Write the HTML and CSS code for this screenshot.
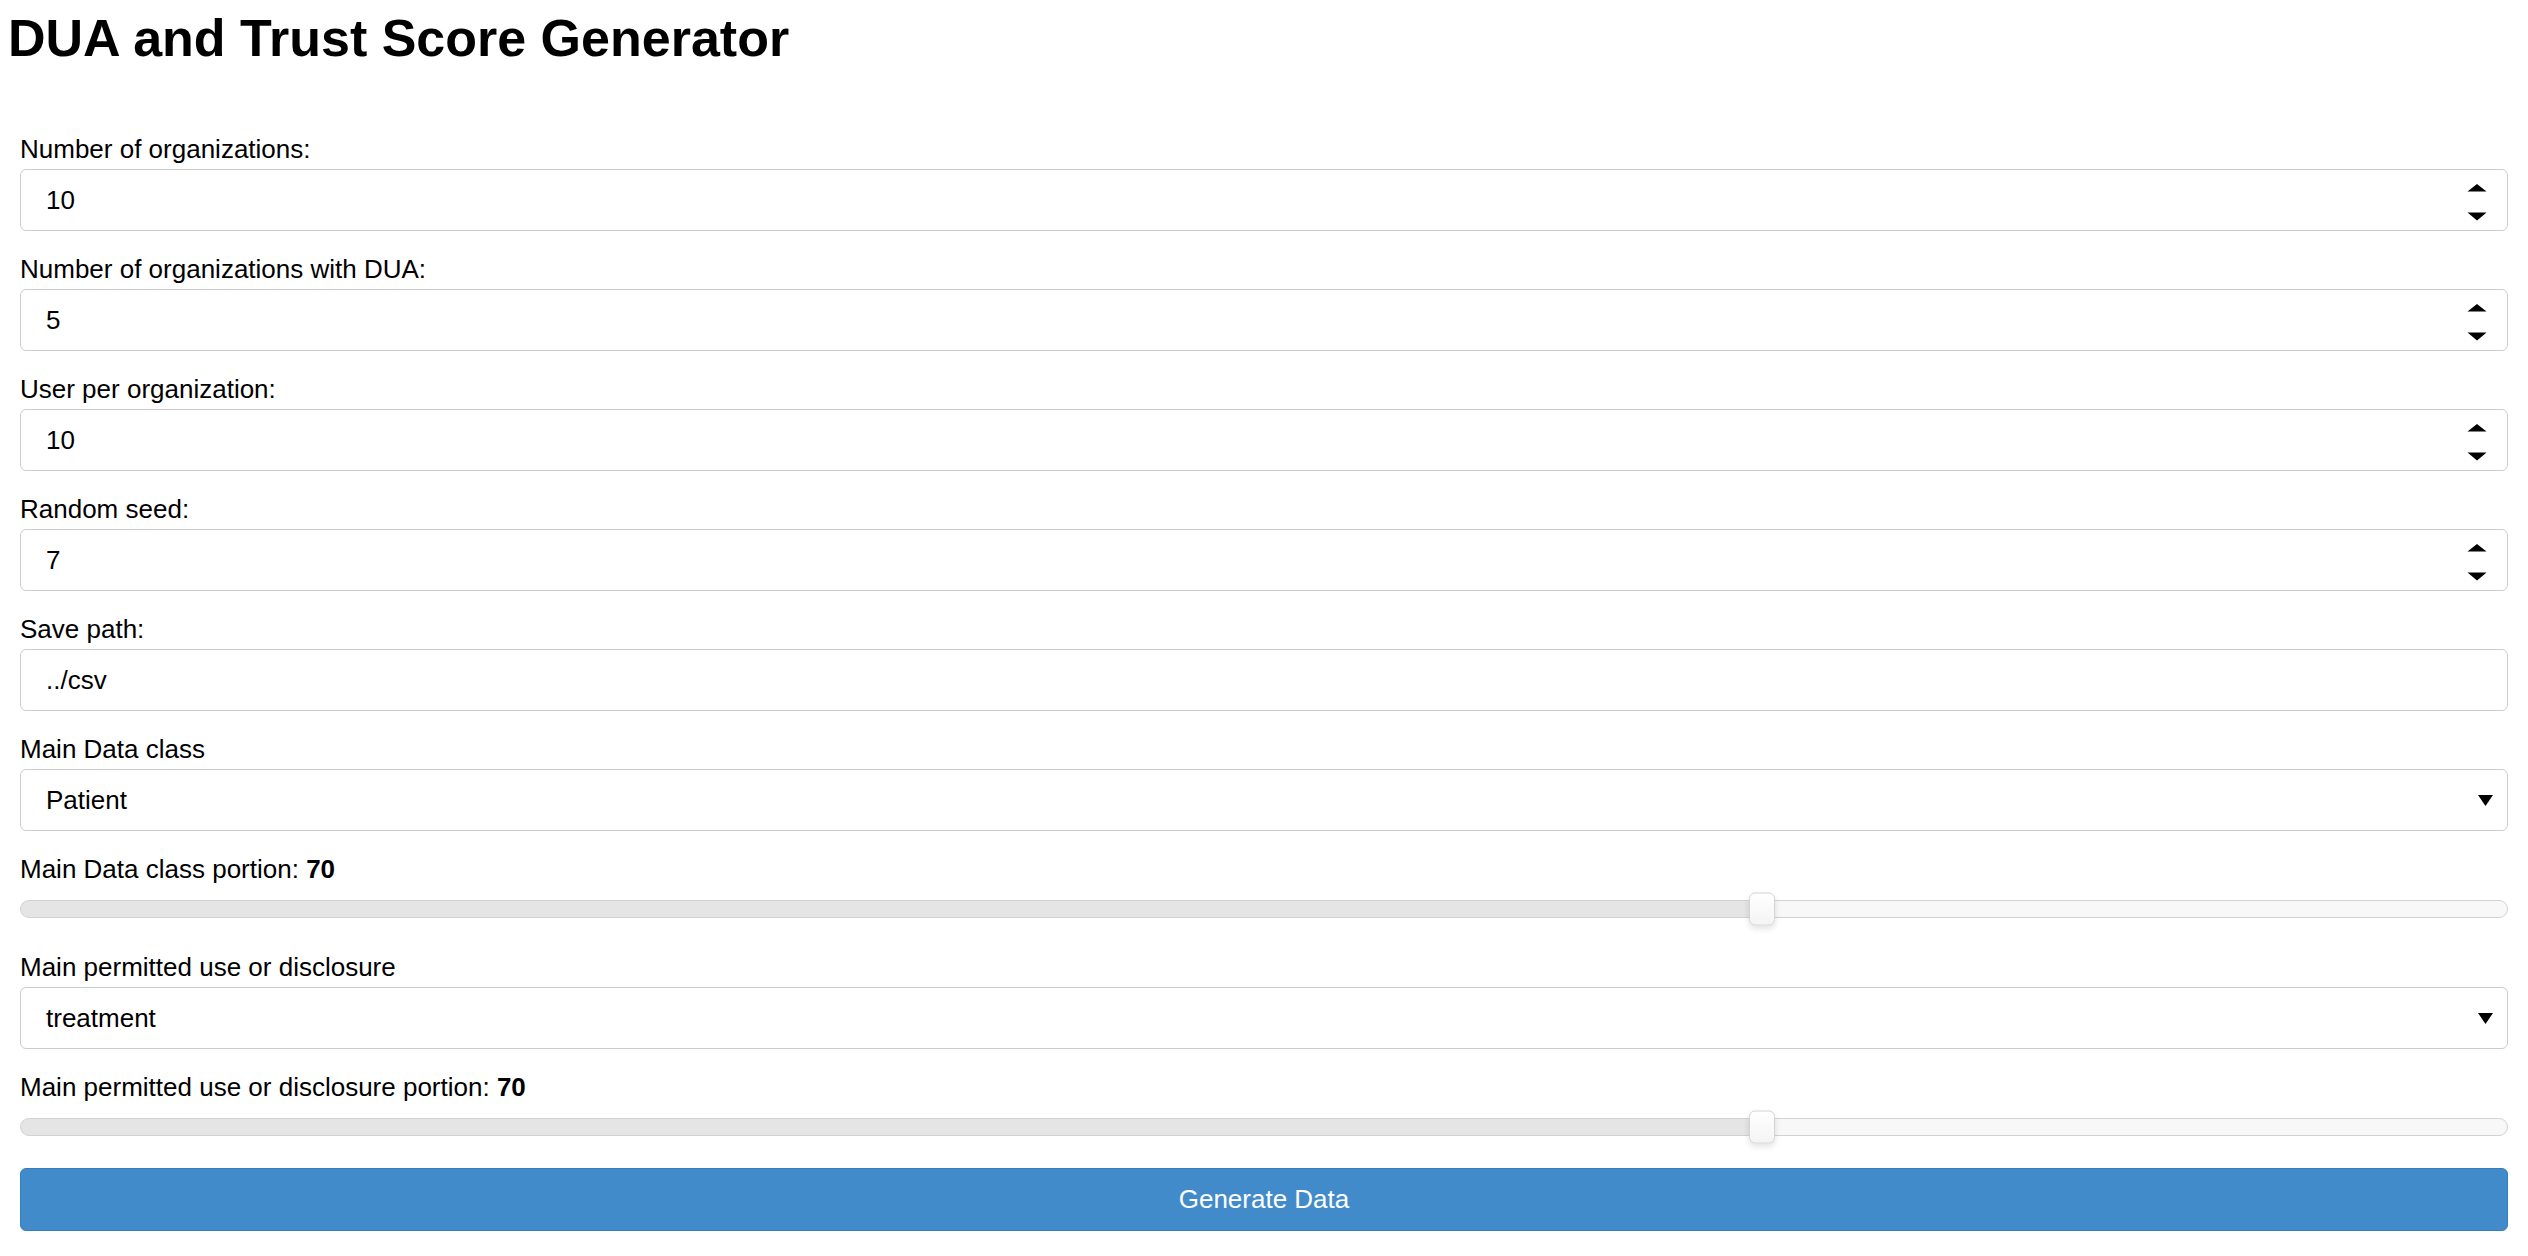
FILE: index.html
```html
<!DOCTYPE html>
<html lang="en">
<head>
<meta charset="utf-8">
<title>DUA and Trust Score Generator</title>
<link rel="stylesheet" href="styles.css">
</head>
<body>
<h1 class="title">DUA and Trust Score Generator</h1>
<form class="form">
  <div class="group">
    <label class="label" for="n-org">Number of organizations:</label>
    <div class="field">
      <input class="control" id="n-org" type="number" value="10">
      <svg class="spin" viewBox="0 0 20 37" aria-hidden="true"><polygon points="0.5,7.5 10,0 19.5,7.5"/><polygon points="0.5,28.5 19.5,28.5 10,36.5"/></svg>
    </div>
  </div>
  <div class="group">
    <label class="label" for="n-dua">Number of organizations with DUA:</label>
    <div class="field">
      <input class="control" id="n-dua" type="number" value="5">
      <svg class="spin" viewBox="0 0 20 37" aria-hidden="true"><polygon points="0.5,7.5 10,0 19.5,7.5"/><polygon points="0.5,28.5 19.5,28.5 10,36.5"/></svg>
    </div>
  </div>
  <div class="group">
    <label class="label" for="n-user">User per organization:</label>
    <div class="field">
      <input class="control" id="n-user" type="number" value="10">
      <svg class="spin" viewBox="0 0 20 37" aria-hidden="true"><polygon points="0.5,7.5 10,0 19.5,7.5"/><polygon points="0.5,28.5 19.5,28.5 10,36.5"/></svg>
    </div>
  </div>
  <div class="group">
    <label class="label" for="seed">Random seed:</label>
    <div class="field">
      <input class="control" id="seed" type="number" value="7">
      <svg class="spin" viewBox="0 0 20 37" aria-hidden="true"><polygon points="0.5,7.5 10,0 19.5,7.5"/><polygon points="0.5,28.5 19.5,28.5 10,36.5"/></svg>
    </div>
  </div>
  <div class="group">
    <label class="label" for="path">Save path:</label>
    <div class="field">
      <input class="control" id="path" type="text" value="../csv">
    </div>
  </div>
  <div class="group">
    <label class="label" for="dclass">Main Data class</label>
    <div class="field">
      <select class="control" id="dclass"><option>Patient</option></select>
      <svg class="caret" viewBox="0 0 15 11" aria-hidden="true"><polygon points="0,0 15,0 7.5,11"/></svg>
    </div>
  </div>
  <div class="group">
    <div class="label">Main Data class portion: <b>70</b></div>
    <div class="slider" style="--value:70%">
      <div class="track"></div>
      <div class="thumb"></div>
    </div>
  </div>
  <div class="group">
    <label class="label" for="puse">Main permitted use or disclosure</label>
    <div class="field">
      <select class="control" id="puse"><option>treatment</option></select>
      <svg class="caret" viewBox="0 0 15 11" aria-hidden="true"><polygon points="0,0 15,0 7.5,11"/></svg>
    </div>
  </div>
  <div class="group">
    <div class="label">Main permitted use or disclosure portion: <b>70</b></div>
    <div class="slider" style="--value:70%">
      <div class="track"></div>
      <div class="thumb"></div>
    </div>
  </div>
  <button class="btn" type="button">Generate Data</button>
</form>
</body>
</html>
```

FILE: styles.css
```css
html, body {
  background: #fff;
}

body {
  margin: 8px;
  font-family: "Liberation Sans", Arial, Helvetica, sans-serif;
  font-size: 26px;
  color: #000;
}

.title {
  margin: 0;
  font-size: 52px;
  font-weight: bold;
  line-height: 60px;
}

.form {
  padding: 66px 12px 0;
}

.group {
  margin-bottom: 23px;
}

.label {
  display: block;
  line-height: 30px;
  margin-bottom: 5px;
  font-weight: normal;
}

.label b {
  font-weight: bold;
}

.field {
  position: relative;
}

.control {
  display: block;
  box-sizing: border-box;
  width: 100%;
  height: 62px;
  margin: 0;
  padding: 0 24px 0 25px;
  font: inherit;
  color: #000;
  background: #fff;
  border: 1px solid #cccccc;
  border-radius: 6px;
  outline: none;
  -webkit-appearance: none;
  appearance: none;
  -moz-appearance: textfield;
}

.control::-webkit-inner-spin-button,
.control::-webkit-outer-spin-button {
  -webkit-appearance: none;
  margin: 0;
}

.spin {
  position: absolute;
  right: 21px;
  top: 15px;
  width: 20px;
  height: 37px;
  fill: #000;
  pointer-events: none;
}

.caret {
  position: absolute;
  right: 15px;
  top: 26px;
  width: 15px;
  height: 11px;
  fill: #000;
  pointer-events: none;
}

.slider {
  position: relative;
  display: flex;
  align-items: center;
  height: 40px;
}

.track {
  flex: 1;
  box-sizing: border-box;
  height: 18px;
  border: 1px solid #d2d2d2;
  border-radius: 9px;
  background: linear-gradient(to right, #e5e5e5 var(--value), #f8f8f8 var(--value));
}

.thumb {
  position: absolute;
  left: var(--value);
  top: 50%;
  box-sizing: border-box;
  width: 26px;
  height: 33px;
  transform: translate(-50%, -50%);
  border: 1px solid #d4d4d4;
  border-radius: 6px;
  background: linear-gradient(#ffffff, #f4f4f4);
  box-shadow: 0 3px 6px rgba(0, 0, 0, 0.12);
}

.btn {
  display: block;
  box-sizing: border-box;
  width: 100%;
  height: 63px;
  margin: -2px 0 0;
  padding: 0;
  font: inherit;
  color: #fff;
  background: #428bca;
  border: 1px solid #357ebd;
  border-radius: 6px;
  cursor: pointer;
}
```
